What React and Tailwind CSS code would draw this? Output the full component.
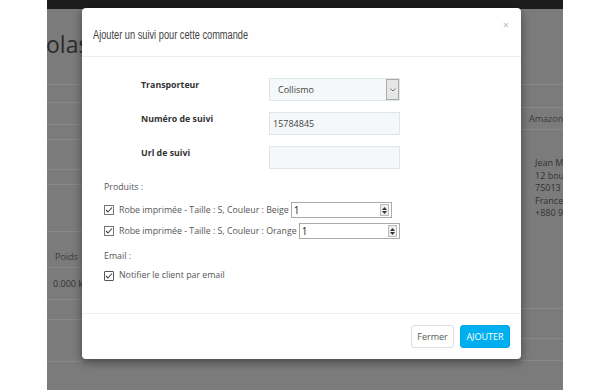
import React from "react";

function Check({ dark }) {
  return (
    <span
      className={
        "inline-flex items-center justify-center w-[10px] h-[10px] border shrink-0 bg-white " +
        (dark ? "border-[#555] rounded-[1px]" : "border-[#777]")
      }
    >
      <svg width="8" height="8" viewBox="0 0 8 8">
        <path d="M1 4 L3 6 L7 1.5" fill="none" stroke="#444" strokeWidth="1.1" />
      </svg>
    </span>
  );
}

function NumberBox({ w }) {
  return (
    <span className={"inline-flex items-center h-[16px] border border-[#aaa] bg-white " + w}>
      <span className="flex-1 pl-[2px] text-[10px] text-[#222] leading-none">1</span>
      <span className="flex flex-col w-[9px] h-[12px] mr-[2px] border border-[#bbb] bg-[#eee] items-center justify-center gap-[1px]">
        <svg width="5" height="3" viewBox="0 0 5 3"><path d="M0 3 L2.5 0 L5 3Z" fill="#333" /></svg>
        <svg width="5" height="3" viewBox="0 0 5 3"><path d="M0 0 L2.5 3 L5 0Z" fill="#333" /></svg>
      </span>
    </span>
  );
}

export default function App() {
  const line = "border-b border-[#888]";
  return (
    <div
      className="relative w-[610px] h-[390px] flex bg-white overflow-hidden"
      style={{ fontFamily: '"Open Sans", "Liberation Sans", sans-serif' }}
    >
      <div className="w-[47px] bg-white" />
      <div className="w-[516px] bg-[#7b7b7b] flex flex-col">
        <div className="h-[9px] bg-[#1c1c1c]" />
        <div className="flex flex-1">
          <div className="w-[35px] flex flex-col overflow-hidden">
            <div className={"h-[76px] " + line}>
              <div className="mt-[21px] ml-[-1px] text-[23px] leading-[28px] text-[#2c2c2c] whitespace-nowrap">olas</div>
            </div>
            <div className={"h-[18px] " + line} />
            <div className={"h-[22px] " + line} />
            <div className={"h-[15px] " + line} />
            <div className={"h-[30px] " + line} />
            <div className={"h-[15px] " + line} />
            <div className={"h-[47px] " + line} />
            <div className="h-[36px] border-b border-[#7f8a90] flex items-end pb-[4px] pl-[8px] text-[9px] text-[#3c3c3c]">Poids</div>
            <div className={"h-[32px] flex items-center pl-[6px] text-[9px] text-[#333] whitespace-nowrap " + line}>0.000 kg</div>
            <div className={"h-[20px] " + line} />
            <div className={"h-[42px] " + line} />
          </div>
          <div className="flex-1" />
          <div className="w-[42px] flex flex-col overflow-hidden">
            <div className={"h-[76px] " + line} />
            <div className={"h-[23px] " + line} />
            <div className={"h-[22px] flex items-center pl-[8px] text-[9px] text-[#3a3a3a] " + line}>Amazon</div>
            <div className="h-[178px] pl-[14px] pt-[27px] text-[9px] leading-[12.5px] text-[#333] whitespace-nowrap">
              <div>Jean M</div>
              <div>12 bou</div>
              <div>75013</div>
              <div>France</div>
              <div>+880 9</div>
            </div>
            <div className={"h-[1px] " + line} />
            <div className={"h-[30px] " + line} />
            <div className={"h-[22px] " + line} />
          </div>
        </div>
      </div>
      <div className="w-[47px] bg-white" />

      {/* Modal */}
      <div className="absolute left-[82px] top-[8px] w-[439px] h-[351px] bg-white rounded-[4px] shadow-[0_3px_10px_rgba(0,0,0,0.45)] flex flex-col">
        <div className="h-[49px] border-b border-[#eee] flex items-center pl-[11px] pr-[12px]">
          <div className="flex-1 pt-[1px]">
            <div
              className="inline-block text-[12px] text-[#444] whitespace-nowrap origin-left scale-x-[0.77]"
              style={{ fontFamily: '"Liberation Sans", sans-serif' }}
            >
              Ajouter un suivi pour cette commande
            </div>
          </div>
          <div className="text-[11px] text-[#bbb] leading-none mt-[-16px]">×</div>
        </div>

        <div className="flex-1 flex flex-col pl-[22px] pt-[21px]">
          <div className="grid grid-cols-[128px_131px] gap-y-[11px] pl-[37px]">
            <div className="text-[8.8px] font-bold text-[#333] pt-[1px]">Transporteur</div>
            <div className="h-[23px] flex border border-[#dde6ea] bg-[#f5f8f9]">
              <div className="flex-1 flex items-center pl-[8px] text-[9px] text-[#444]">Collismo</div>
              <div className="w-[13px] bg-[#e6e6e6] border border-[#aaa] flex items-center justify-center">
                <svg width="6" height="4" viewBox="0 0 6 4"><path d="M0.5 0.5 L3 3 L5.5 0.5" fill="none" stroke="#666" strokeWidth="0.9" /></svg>
              </div>
            </div>
            <div className="text-[8.8px] font-bold text-[#333] pt-[1px]">Numéro de suivi</div>
            <div className="h-[23px] flex items-center border border-[#dde6ea] bg-[#f5f8f9] pl-[3px] text-[9px] text-[#444]">15784845</div>
            <div className="text-[8.8px] font-bold text-[#333] pt-[1px]">Url de suivi</div>
            <div className="h-[23px] border border-[#dde6ea] bg-[#f5f8f9]" />
          </div>

          <div className="mt-[12px] text-[8.8px] text-[#555]">Produits :</div>
          <div className="mt-[8px] flex flex-col gap-[5px]">
            <div className="flex items-center h-[16px]">
              <Check />
              <span className="ml-[5px] mr-[2px] text-[8.8px] text-[#555] whitespace-nowrap">Robe imprimée - Taille : S, Couleur : Beige</span>
              <NumberBox w="w-[101px]" />
            </div>
            <div className="flex items-center h-[16px]">
              <Check />
              <span className="ml-[5px] mr-[2px] text-[8.8px] text-[#555] whitespace-nowrap">Robe imprimée - Taille : S, Couleur : Orange</span>
              <NumberBox w="w-[101px]" />
            </div>
          </div>

          <div className="mt-[11px] text-[8.8px] text-[#555]">Email :</div>
          <div className="mt-[6px] flex items-center">
            <Check dark />
            <span className="ml-[5px] text-[8.8px] text-[#555]">Notifier le client par email</span>
          </div>
        </div>

        <div className="h-[46px] border-t border-[#eee] flex items-start justify-end gap-[6px] pr-[11px] pt-[11px]">
          <button className="h-[23px] w-[43px] border border-[#ddd] rounded-[3px] bg-white text-[9px] text-[#555]">Fermer</button>
          <button className="h-[23px] w-[50px] border border-[#00a6e2] rounded-[3px] bg-[#00aff0] text-[9px] text-white">AJOUTER</button>
        </div>
      </div>
    </div>
  );
}
